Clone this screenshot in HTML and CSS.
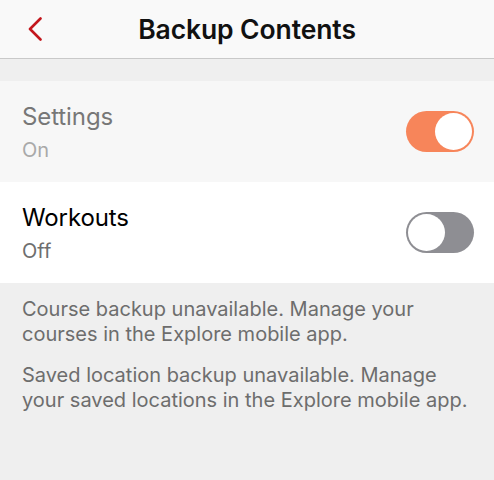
FILE: index.html
```html
<!DOCTYPE html>
<html>
<head>
<meta charset="utf-8">
<link rel="stylesheet" href="styles.css">
</head>
<body>
<div class="screen">
  <header class="nav">
    <span class="back" aria-label="Back">
      <svg width="16" height="24" viewBox="0 0 16 24"><path d="M13.5 1.5 L3 12 L13.5 22.5" fill="none" stroke="#c3161c" stroke-width="2.6" stroke-linecap="round" stroke-linejoin="round"/></svg>
    </span>
    <h1 class="title">Backup Contents</h1>
  </header>
  <div class="band"></div>
  <div class="row row-disabled">
    <div class="row-text">
      <div class="row-title">Settings</div>
      <div class="row-sub">On</div>
    </div>
    <div class="toggle toggle-on"><span class="knob"></span></div>
  </div>
  <div class="row">
    <div class="row-text">
      <div class="row-title">Workouts</div>
      <div class="row-sub">Off</div>
    </div>
    <div class="toggle toggle-off"><span class="knob"></span></div>
  </div>
  <div class="notes">
    <p>Course backup unavailable. Manage your courses in the Explore mobile app.</p>
    <p>Saved location backup unavailable. Manage your saved locations in the Explore mobile app.</p>
  </div>
</div>
</body>
</html>
```
FILE: styles.css
```css
html, body {
  margin: 0;
  padding: 0;
  height: 100%;
}
body {
  font-family: Inter, "Open Sans", "Liberation Sans", sans-serif;
  background: #efefef;
}
.screen {
  display: flex;
  flex-direction: column;
  min-height: 100%;
}
.nav {
  height: 58px;
  background: #f9f9f9;
  border-bottom: 1px solid #c9c9c9;
  display: flex;
  align-items: center;
  justify-content: center;
  position: relative;
}
.back {
  position: absolute;
  left: 27px;
  top: 17px;
  width: 16px;
  height: 24px;
  display: flex;
}
.title {
  margin: 0;
  font-size: 26.5px;
  font-weight: 600;
  color: #111;
  letter-spacing: -0.1px;
}
.band {
  height: 22px;
  background: #efefef;
}
.row {
  height: 101px;
  background: #fff;
  display: flex;
  align-items: center;
  justify-content: space-between;
  padding: 0 20px 0 22px;
}
.row-disabled {
  background: #f7f7f7;
}
.row-text {
  padding-top: 3px;
}
.row-title {
  font-size: 24px;
  color: #000;
  line-height: 30px;
  letter-spacing: -0.1px;
}
.row-sub {
  font-size: 20px;
  color: #6e6e6e;
  line-height: 28px;
  margin-top: 4px;
}
.row-disabled .row-title { color: #777; }
.row-disabled .row-sub { color: #a9a9a9; }
.toggle {
  width: 68px;
  height: 41px;
  border-radius: 21px;
  box-sizing: border-box;
  padding: 2px;
  display: flex;
}
.toggle-on {
  background: #f7855a;
  justify-content: flex-end;
}
.toggle-off {
  background: #8e8e93;
  justify-content: flex-start;
}
.knob {
  width: 37px;
  height: 37px;
  border-radius: 50%;
  background: #fff;
}
.notes {
  flex: 1;
  padding: 14px 22px;
  color: #6d6d6d;
  font-size: 20px;
  line-height: 25px;
}
.notes p {
  margin: 0 0 16px;
}
```
